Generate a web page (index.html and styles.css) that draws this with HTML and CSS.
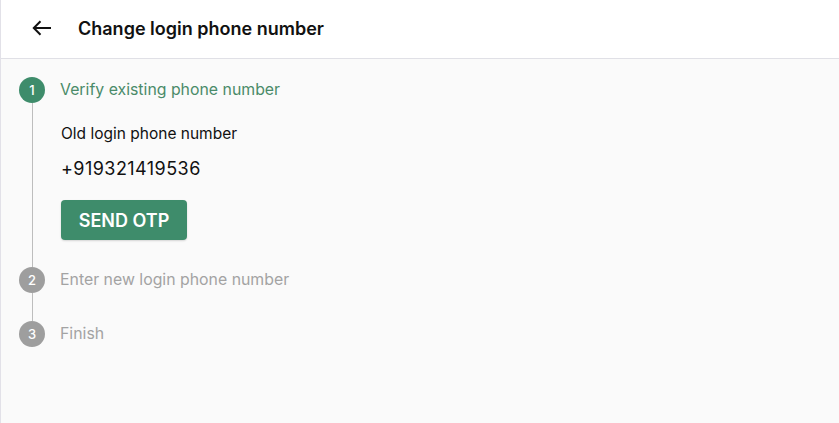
FILE: index.html
```html
<!DOCTYPE html>
<html>
<head>
<meta charset="utf-8">
<link rel="stylesheet" href="styles.css">
</head>
<body>
<div class="page">
  <header class="header">
    <svg class="back" width="20" height="20" viewBox="0 0 20 20"><path d="M2 10H19M8.5 3.3L1.8 10L8.5 16.7" fill="none" stroke="#111" stroke-width="2"/></svg>
    <h1 class="title">Change login phone number</h1>
  </header>
  <main class="stepper">
    <div class="step-head">
      <span class="dot dot-active">1</span>
      <span class="label label-active">Verify existing phone number</span>
    </div>
    <div class="step-body">
      <div class="field-label">Old login phone number</div>
      <div class="phone">+919321419536</div>
      <button class="btn">SEND OTP</button>
    </div>
    <div class="step-head">
      <span class="dot">2</span>
      <span class="label">Enter new login phone number</span>
    </div>
    <div class="connector"></div>
    <div class="step-head">
      <span class="dot">3</span>
      <span class="label">Finish</span>
    </div>
  </main>
</div>
</body>
</html>
```
FILE: styles.css
```css
* { box-sizing: border-box; }
html, body { margin: 0; padding: 0; height: 100%; }
body { font-family: Inter, "Noto Sans", sans-serif; background: #fafafa; }
.page { min-height: 100%; border-left: 1px solid #e2e1e8; background: #fafafa; }
.header {
  height: 59px;
  background: #fff;
  border-bottom: 1px solid #e0e0e6;
  display: flex;
  align-items: center;
  padding-left: 31px;
  padding-bottom: 2px;
}
.back { display: block; }
.title { margin: 0 0 0 26px; font-size: 18px; font-weight: 600; color: #111; }
.stepper { padding: 18px 0 0 18px; }
.step-head { display: flex; align-items: center; height: 26px; }
.dot {
  width: 26px; height: 26px; border-radius: 50%;
  background: #9e9e9e; color: #fff;
  font-size: 13px; font-weight: 500;
  display: flex; align-items: center; justify-content: center;
  flex-shrink: 0;
}
.dot-active { background: #3e8c6b; }
.label { margin-left: 15px; font-size: 15.85px; line-height: 24px; padding-bottom: 1px; color: #a3a3a3; }
.label-active { color: #4a8b69; }
.step-body {
  margin-left: 13px;
  border-left: 1px solid #bdbdbd;
  padding: 22px 0 27px 28px;
}
.field-label { font-size: 15.5px; line-height: 18px; color: #111; }
.phone { margin-top: 15px; font-size: 18px; line-height: 22px; color: #111; letter-spacing: 0.45px; }
.btn {
  margin-top: 20px;
  width: 126px; height: 40px;
  background: #3e8c6b; color: #fff;
  border: none; border-radius: 4px;
  font-family: inherit; font-size: 18px; font-weight: 600;
  display: block;
  box-shadow: 0 1px 2px rgba(0,0,0,0.15);
}
.connector { margin-left: 13px; height: 28px; border-left: 1px solid #bdbdbd; }
```
